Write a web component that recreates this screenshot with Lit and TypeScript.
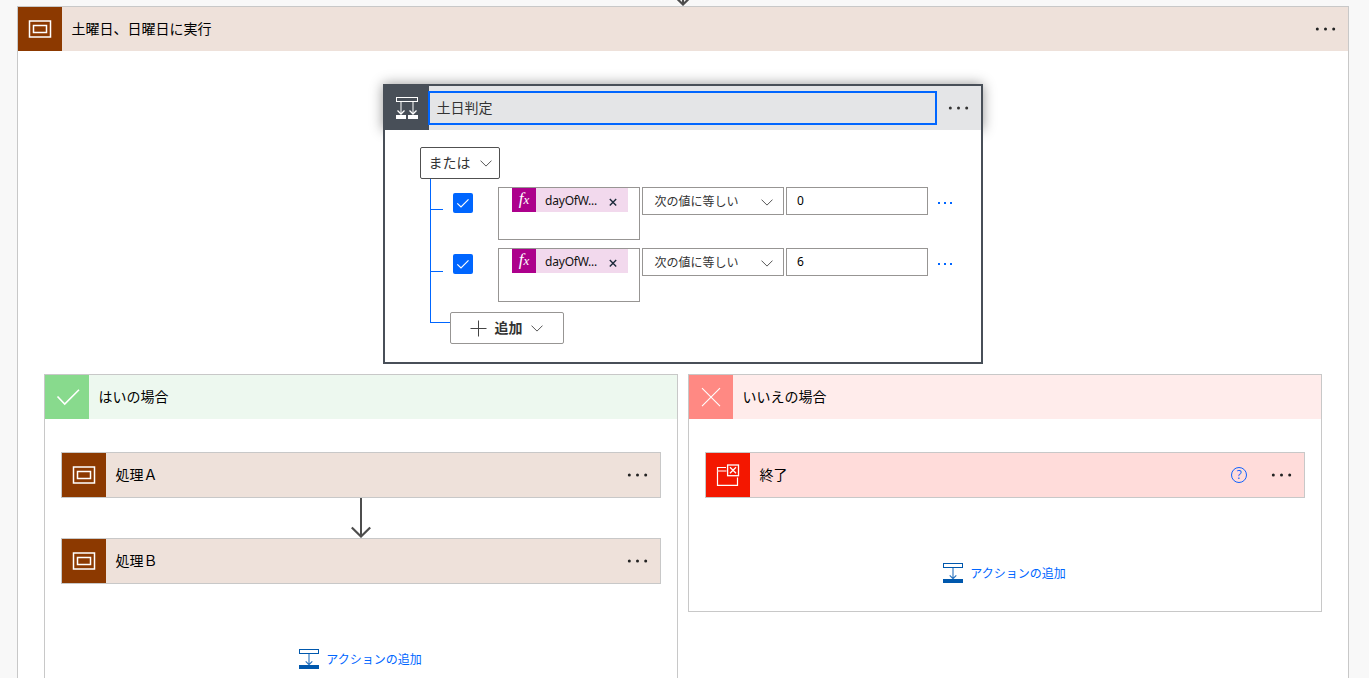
import { LitElement, html, svg, css } from "lit";
import { customElement, property } from "lit/decorators.js";

const reset = css`
  * { box-sizing: border-box; }
  svg { display: block; flex: none; }
`;

const scopeIcon = svg`<svg width="44" height="44" viewBox="0 0 44 44" fill="none" stroke="#fff">
  <rect x="11.5" y="14" width="21" height="16" stroke-width="1.5"/>
  <rect x="15.5" y="18.5" width="13" height="7" stroke-width="1.5"/></svg>`;

const conditionIcon = svg`<svg width="44" height="44" viewBox="0 0 44 44" fill="none" stroke="#fff">
  <rect x="11.5" y="11.5" width="21" height="4"/>
  <path d="M16 16v11M28 16v11" stroke-width="1.3" stroke="#d5d7d9"/>
  <path d="M12.500 24.500L16 28l3.500-3.500M24.500 24.500L28 28l3.500-3.500" stroke-width="1.300"/>
  <path d="M11 29h10v4H11zM23 29h10v4H23z" fill="#fff" stroke="none"/></svg>`;

const yesIcon = svg`<svg width="44" height="44" viewBox="0 0 44 44" fill="none" stroke="#fff" stroke-width="1.600">
  <path d="M12.500 21.500L19.700 29L34 14.700"/></svg>`;

const noIcon = svg`<svg width="44" height="44" viewBox="0 0 44 44" fill="none" stroke="#fff" stroke-width="1.100">
  <path d="M13 13.200L31 31.200M31 13.200L13 31.200"/></svg>`;

const terminateIcon = svg`<svg width="44" height="44" viewBox="0 0 44 44" fill="none" stroke="#fff">
  <path d="M20 14.500H11.500V32.300H31.500V24.500" stroke-width="1.200"/>
  <path d="M11.500 18H20.500" stroke-width="1.500" stroke="#ffb3ab"/>
  <rect x="21.600" y="12" width="10.900" height="10.700" stroke-width="1.300"/>
  <path d="M24 14.300l6 6M30 14.300l-6 6" stroke-width="1.300"/></svg>`;

const dots = (color: string) => svg`<svg width="45" height="44" viewBox="0 0 45 44" fill=${color}>
  <circle cx="14.300" cy="22" r="1.500"/><circle cx="22.500" cy="22" r="1.500"/><circle cx="30.700" cy="22" r="1.500"/></svg>`;

const chevron = svg`<svg width="12" height="7" viewBox="0 0 12 7" fill="none" stroke="#444" stroke-width="0.900">
  <path d="M0.500 0.600L6 6.100L11.500 0.600"/></svg>`;

const flowArrow = svg`<svg width="20" height="40" viewBox="0 0 20 40" fill="none" stroke="#4d4d4d">
  <path d="M10 0V38" stroke-width="2"/><path d="M0.800 29.500L10 38.500L19.200 29.500" stroke-width="2.200"/></svg>`;

const ICONS: Record<string, unknown> = {
  scope: scopeIcon,
  yes: yesIcon,
  no: noIcon,
  terminate: terminateIcon,
};

@customElement("card-header")
export class CardHeader extends LitElement {
  @property() kind = "scope";
  @property() label = "";
  @property({ type: Boolean }) menu = false;
  @property({ type: Boolean }) help = false;

  static styles = [reset, css`
    :host { display: block; }
    .bar { display: flex; align-items: center; height: 44px; }
    .label { flex: 1; padding: 0 0 2px 9.500px; font-size: 14px; line-height: 20px; color: #000; }
    .scope { background: #eee1da; }
    .scope .tile { background: #8c3900; }
    .yes { background: #edf8ef; }
    .yes .tile { background: #88da8d; }
    .no { background: #ffeceb; }
    .no .tile { background: #ff8983; }
    .terminate { background: #ffdcda; }
    .terminate .tile { background: #f41700; }
    .help { display: grid; place-items: center; width: 16px; height: 16px; margin: 0 12px 1px 0;
      border: 1px solid #0f62fe; border-radius: 50%; color: #0f62fe; font: 12px/14px "Open Sans", sans-serif; }
  `];

  render() {
    return html`<div class="bar ${this.kind}">
      <div class="tile">${ICONS[this.kind]}</div>
      <div class="label">${this.label}</div>
      ${this.help ? html`<div class="help">?</div>` : ""}
      ${this.menu ? dots("#222") : ""}
    </div>`;
  }
}

@customElement("add-action")
export class AddAction extends LitElement {
  static styles = [reset, css`
    :host { display: flex; align-items: center; justify-content: center; gap: 7px; height: 20px; padding-right: 1px; }
    .text { font-size: 12px; line-height: 20px; color: #0066ff; }
  `];

  render() {
    return html`<svg width="20" height="20" viewBox="0 0 20 20" fill="none" stroke="#0058ad">
        <rect x="0.500" y="0.500" width="19" height="4"/>
        <path d="M10 5V15.500M6.700 12.300L10 15.600L13.300 12.300" stroke-width="1.100" stroke="#2872bd"/>
        <rect x="0" y="16" width="20" height="4" fill="#0058ad" stroke="none"/>
      </svg><span class="text">アクションの追加</span>`;
  }
}

@customElement("condition-card")
export class ConditionCard extends LitElement {
  static styles = [reset, css`
    :host { display: block; width: 600px; }
    .head { display: flex; align-items: center; height: 46px; border: 2px solid #484f58; border-bottom: 0;
      background: #e4e5e7; box-shadow: 0 0 12px rgba(0, 0, 0, .42); }
    .tile { background: #484f58; }
    .title { flex: 1; height: 34px; margin: 0 -1px; padding: 0 6.500px; border: 2px solid #0066ff; z-index: 1;
      font-size: 14px; line-height: 29px; color: #333; }
    .body { position: relative; height: 234px; padding: 17px 0 0 35px; border: 2px solid #484f58;
      border-top: 0; background: #fff; }
    .button { display: flex; align-items: center; background: #fff; color: #333; border-radius: 2px;
      font-size: 14px; line-height: 28px; height: 32px; }
    .word { padding-bottom: 2px; }
    .either { width: 80px; padding-left: 7.500px; gap: 9px; border: 1px solid #505050; }
    .tree { display: grid; grid-template-columns: 20px 1fr; margin-left: 10px; }
    .rail { height: 144px; border: solid #0066ff; border-width: 0 0 1px 1px; }
    .rows { display: flex; flex-direction: column; padding-top: 8px; gap: 8px; }
    .row { display: flex; align-items: flex-start; height: 53px; }
    .row.tall, .row.tall .token-box { height: 54px; }
    .tick { width: 13px; height: 1px; margin: 22px 10px 0 -20px; background: #0066ff; }
    .row.tall .tick { margin-top: 23px; }
    .check { width: 20px; height: 20px; margin-top: 6px; border-radius: 2px; background: #0066ff; }
    .token-box { width: 142px; height: 53px; margin: 0 2px 0 25px; padding-left: 13px; border: 1px solid #979593; }
    .token { display: flex; width: 116px; height: 24px; background: #f2d9ed; color: #111;
      font: 12px/26px "Noto Sans", sans-serif; }
    .fx { width: 24px; background: #ad008c; color: #fff; text-align: center;
      font: italic 17px/22px "Liberation Serif", serif; }
    .fx small { font-size: 13px; }
    .name { width: 54px; margin-left: 9px; letter-spacing: -0.200px; }
    .close { margin: 10px 0 0 10px; }
    .op, .value { height: 28px; border: 1px solid #979593; width: 142px; margin-right: 2px; }
    .op { display: flex; align-items: center; padding-left: 11.500px; gap: 22.500px; font-size: 12px;
      line-height: 26px; color: #333; }
    .op svg { margin-top: 3px; }
    .value { margin-right: 9px; padding-left: 10px; font: 12px/26px "Noto Sans", sans-serif; color: #000; }
    .more { margin-top: 15px; }
    .add { width: 114px; margin-top: 2px; padding-left: 19px; border: 1px solid #979593; font-weight: 700; }
    .add .word { margin: 0 8px 0 7.500px; }
  `];

  private row(value: string, tall: boolean) {
    return html`<div class="row ${tall ? "tall" : ""}">
      <div class="tick"></div>
      <div class="check"><svg width="20" height="20" viewBox="0 0 20 20" fill="none" stroke="#fff" stroke-width="1.200">
        <path d="M4.300 10.300L8 14L15.500 6.300"/></svg></div>
      <div class="token-box"><div class="token">
        <div class="fx">f<small>x</small></div><div class="name">dayOfW...</div>
        <svg class="close" width="8" height="8" viewBox="0 0 8 8" stroke="#1b2a3a" stroke-width="1.400">
          <path d="M0.800 1L7.200 7.400M7.200 1L0.800 7.400"/></svg>
      </div></div>
      <div class="op">次の値に等しい${chevron}</div>
      <div class="value">${value}</div>
      <svg class="more" width="16" height="2" viewBox="0 0 16 2" fill="#0066ff">
        <path d="M1 0h2v2h-2zM7 0h2v2h-2zM13 0h2v2h-2z"/></svg>
    </div>`;
  }

  render() {
    return html`
      <div class="head"><div class="tile">${conditionIcon}</div><div class="title">土日判定</div>${dots("#333")}</div>
      <div class="body">
        <div class="button either"><span class="word">または</span>${chevron}</div>
        <div class="tree">
          <div class="rail"></div>
          <div class="rows">
            ${this.row("0", false)}
            ${this.row("6", true)}
            <div class="button add">
              <svg width="17" height="17" viewBox="0 0 17 17" stroke="#444"><path d="M8.500 0.500V16.500M0.500 8.500H16.500"/></svg>
              <span class="word">追加</span>${chevron}
            </div>
          </div>
        </div>
      </div>`;
  }
}

@customElement("app-root")
export class AppRoot extends LitElement {
  static styles = [reset, css`
    :host { display: block; height: 678px; overflow: hidden; background: #f8f8f8;
      font-family: "Noto Sans CJK JP", sans-serif; }
    .incoming { display: flex; flex-direction: column; align-items: center; justify-content: flex-end;
      height: 6px; overflow: hidden; padding-right: 3px; }
    .scope { width: 1332px; height: 700px; margin-left: 17px; border: 1px solid #c8c8c8; background: #fff; }
    .condition { display: flex; justify-content: center; padding-top: 33px; }
    .branches { display: grid; grid-template-columns: 634px 634px; gap: 10px; align-items: start;
      padding: 10px 0 0 26px; }
    .branch { border: 1px solid #c8c8c8; background: #fff; height: 340px; }
    .branch.short { height: 238px; }
    .steps { display: flex; flex-direction: column; align-items: center; padding-top: 33px; }
    .step { width: 600px; border: 1px solid #c8c8c8; }
    .add { margin-top: 65px; }
  `];

  render() {
    return html`
      <div class="incoming">${flowArrow}</div>
      <div class="scope">
        <card-header kind="scope" label="土曜日、日曜日に実行" menu></card-header>
        <div class="condition"><condition-card></condition-card></div>
        <div class="branches">
          <div class="branch">
            <card-header kind="yes" label="はいの場合"></card-header>
            <div class="steps">
              <card-header class="step" kind="scope" label="処理Ａ" menu></card-header>
              ${flowArrow}
              <card-header class="step" kind="scope" label="処理Ｂ" menu></card-header>
              <add-action class="add"></add-action>
            </div>
          </div>
          <div class="branch short">
            <card-header kind="no" label="いいえの場合"></card-header>
            <div class="steps">
              <card-header class="step" kind="terminate" label="終了" menu help></card-header>
              <add-action class="add"></add-action>
            </div>
          </div>
        </div>
      </div>`;
  }
}
